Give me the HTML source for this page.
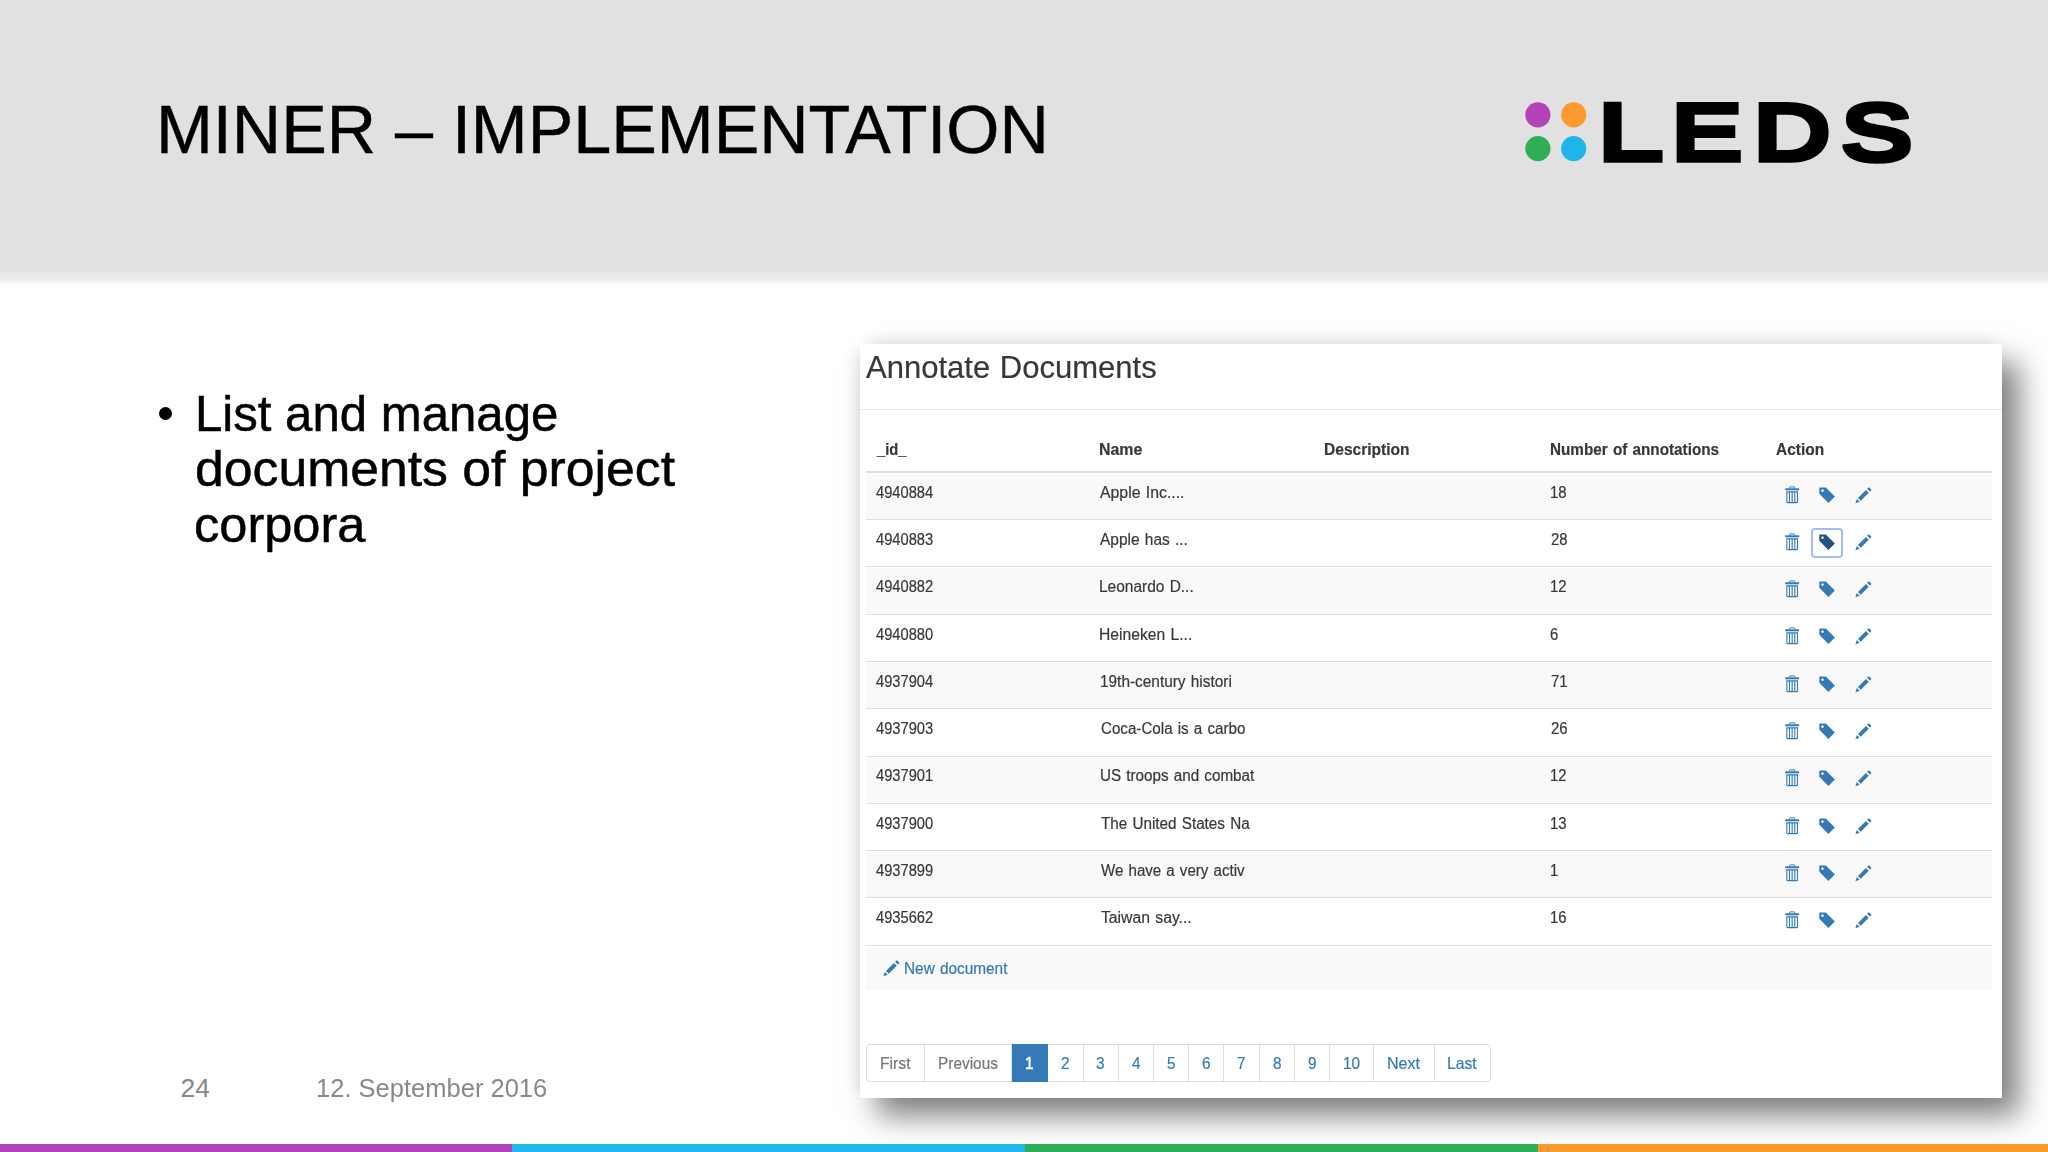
<!DOCTYPE html>
<html lang="en">
<head>
<meta charset="utf-8">
<title>MINER – IMPLEMENTATION</title>
<style>
html,body{margin:0;padding:0;background:#fff;}
body{width:2048px;height:1152px;overflow:hidden;font-family:"Liberation Sans",sans-serif;}
#slide{position:relative;width:2048px;height:1152px;overflow:hidden;background:#fff;}
.abs{position:absolute;white-space:nowrap;}
.sx{display:inline-block;transform-origin:0 50%;white-space:nowrap;}
/* header band */
#band{position:absolute;left:0;top:0;width:2048px;height:272px;background:#e1e1e1;}
#bandsh{position:absolute;left:0;top:272px;width:2048px;height:18px;
  background:linear-gradient(to bottom,#e9e9e9 0,#ececec 7px,#fbfbfb 12px,#ffffff 17px);}
#title{left:155.8px;top:90.9px;font-size:68.7px;line-height:78px;color:#000;-webkit-text-stroke:0.45px #000;}
/* body text */
.bl{font-size:50.5px;line-height:56px;color:#000;-webkit-text-stroke:0.5px #000;}
#bullet{position:absolute;left:158.6px;top:407px;width:13.2px;height:13.2px;border-radius:50%;background:#000;}
/* footer */
.ft{font-size:26.5px;line-height:30px;color:#898989;}
/* bottom bar */
#bar div{position:absolute;top:1144px;height:8px;}
/* screenshot */
#shot{position:absolute;left:860px;top:343.5px;width:1141.5px;height:754.3px;background:#fff;
  box-shadow:17px 18px 28px rgba(0,0,0,.5),0 -14px 11px -7px rgba(0,0,0,.06),-14px 0 11px -7px rgba(0,0,0,.06);}
#shot .abs{color:#333;}
#shotin{position:absolute;left:-860px;top:-343.5px;filter:blur(.4px);width:2048px;height:1152px;}
#shotin .abs{color:#383838;-webkit-text-stroke:0.2px currentColor;}
.ln{position:absolute;}
.ic{position:absolute;color:#337ab7;fill:currentColor;overflow:visible;}
.fbox{position:absolute;width:28.5px;height:25.6px;border:2px solid #a3bdf5;border-radius:4px;background:#fff;}
.pgbox{position:absolute;box-sizing:border-box;border:1.2px solid #ddd;border-radius:4px;background:#fff;}
</style>
</head>
<body>
<div id="slide">
  <div id="band"></div>
  <div id="bandsh"></div>
  <div id="title" class="abs"><span class="sx" style="transform:scaleX(.994)">MINER – IMPLEMENTATION</span></div>

  <svg id="logo" class="abs" style="left:1500px;top:80px" width="440" height="110" viewBox="1500 80 440 110">
    <filter id="thickY" x="-5%" y="-10%" width="110%" height="120%"><feMorphology operator="dilate" radius="0 1"/></filter>
    <circle cx="1537.9" cy="114.8" r="12.6" fill="#b443bb"/>
    <circle cx="1573.7" cy="114.8" r="12.6" fill="#fd9a2e"/>
    <circle cx="1537.9" cy="148.6" r="12.6" fill="#2eae57"/>
    <circle cx="1573.7" cy="148.6" r="12.6" fill="#20b4ea"/>
    <!--LOGO--><text transform="translate(0,160.70) scale(1.1077,0.8377)" x="1441.87 1507.90 1581.86 1661.38" y="0" font-size="100" font-family="Liberation Sans, sans-serif" font-weight="bold" fill="#000" stroke="#000" stroke-width="1.8" vector-effect="non-scaling-stroke" filter="url(#thickY)">LEDS</text><!--/LOGO-->
  </svg>

  <svg width="0" height="0" style="position:absolute">
    <defs>
      <symbol id="i-trash" viewBox="0 0 17 20" overflow="visible">
        <path d="M5.6 3.6V2.4Q5.6 1.9 6.1 1.9H10.2Q10.7 1.9 10.7 2.4V3.6" fill="none" stroke="currentColor" stroke-width="1"/>
        <rect x="1.2" y="3.3" width="13.9" height="2"/>
        <path fill-rule="evenodd" d="M2.3 6.3H14V16.8Q14 18.3 12.5 18.3H3.8Q2.3 18.3 2.3 16.8ZM3.4 7.6V16.9H4.95V7.6ZM6.05 7.6V16.9H7.6V7.6ZM8.7 7.6V16.9H10.25V7.6ZM11.35 7.6V16.9H12.9V7.6Z"/>
      </symbol>
      <symbol id="i-tag" viewBox="0 0 18 18" overflow="visible">
        <g transform="translate(1.3,16.95) scale(0.01297,-0.01297)"><path fill-rule="evenodd" d="M1 700v475q0 10 7.5 17.5t17.5 7.5h474l700 -700l-500 -500zM148 953q0 -42 29 -71q30 -30 71.5 -30t71.5 30q29 29 29 71t-29 71q-30 30 -71.5 30t-71.5 -30q-29 -29 -29 -71z"/></g>
      </symbol>
      <symbol id="i-pencil" viewBox="0 0 18 18" overflow="visible">
        <g transform="translate(1.6,17.1) scale(0.01297,-0.01297)"><path d="M1011 1210q19 0 33 -13l153 -153q13 -14 13 -33t-13 -33l-99 -92l-214 214l95 96q13 14 32 14zM1013 800l-615 -614l-214 214l614 614zM317 96l-333 -112l110 335z"/></g>
      </symbol>
    </defs>
  </svg>
  <div id="bullet"></div>
  <div class="abs bl" style="left:195.2px;top:386.3px"><span class="sx" style="transform:scaleX(.973)">List and manage</span></div>
  <div class="abs bl" style="left:194.6px;top:441px"><span class="sx" style="transform:scaleX(1.024)">documents of project</span></div>
  <div class="abs bl" style="left:194.1px;top:496.5px"><span class="sx" style="transform:scaleX(1.0)">corpora</span></div>

  <div class="abs ft" style="left:180.5px;top:1073px">24</div>
  <div class="abs ft" style="left:316px;top:1073px"><span class="sx" style="transform:scaleX(.963)">12. September 2016</span></div>

  <!--SHOT-BEGIN-->
  <div id="shot"><div id="shotin">
    <div class="ln" style="left:860px;top:408.5px;width:1141.5px;height:1.2px;background:#e6e6e6"></div>
    <div class="ln" style="left:866.4px;top:470.7px;width:1125.3px;height:2.3px;background:#dcdcdc"></div>
    <div class="ln" style="left:866.4px;top:473.5px;width:1125.3px;height:46.3px;background:#f9f9f9"></div>
    <div class="ln" style="left:866.4px;top:519px;width:1125.3px;height:1.4px;background:#dedede"></div>
    <div class="ln" style="left:866.4px;top:566px;width:1125.3px;height:1.4px;background:#dedede"></div>
    <div class="ln" style="left:866.4px;top:568.1px;width:1125.3px;height:46.3px;background:#f9f9f9"></div>
    <div class="ln" style="left:866.4px;top:614px;width:1125.3px;height:1.4px;background:#dedede"></div>
    <div class="ln" style="left:866.4px;top:661px;width:1125.3px;height:1.4px;background:#dedede"></div>
    <div class="ln" style="left:866.4px;top:662.7px;width:1125.3px;height:46.3px;background:#f9f9f9"></div>
    <div class="ln" style="left:866.4px;top:708px;width:1125.3px;height:1.4px;background:#dedede"></div>
    <div class="ln" style="left:866.4px;top:756px;width:1125.3px;height:1.4px;background:#dedede"></div>
    <div class="ln" style="left:866.4px;top:757.3px;width:1125.3px;height:46.3px;background:#f9f9f9"></div>
    <div class="ln" style="left:866.4px;top:803px;width:1125.3px;height:1.4px;background:#dedede"></div>
    <div class="ln" style="left:866.4px;top:850px;width:1125.3px;height:1.4px;background:#dedede"></div>
    <div class="ln" style="left:866.4px;top:851.9px;width:1125.3px;height:46.3px;background:#f9f9f9"></div>
    <div class="ln" style="left:866.4px;top:897px;width:1125.3px;height:1.4px;background:#dedede"></div>
    <div class="ln" style="left:866.4px;top:945px;width:1125.3px;height:1.4px;background:#dedede"></div>
    <div class="ln" style="left:866.4px;top:946.5px;width:1125.3px;height:43.6px;background:#f9f9f9"></div>
    <div class="pgbox" style="left:866.2px;top:1043.6px;width:624.7px;height:38px"></div>
    <div class="ln" style="left:923.9px;top:1044px;width:1.2px;height:37.5px;background:#ddd"></div>
    <div class="ln" style="left:1011.1px;top:1044px;width:1.2px;height:37.5px;background:#ddd"></div>
    <div class="ln" style="left:1047.3px;top:1044px;width:1.2px;height:37.5px;background:#ddd"></div>
    <div class="ln" style="left:1082.5px;top:1044px;width:1.2px;height:37.5px;background:#ddd"></div>
    <div class="ln" style="left:1117.7px;top:1044px;width:1.2px;height:37.5px;background:#ddd"></div>
    <div class="ln" style="left:1152.9px;top:1044px;width:1.2px;height:37.5px;background:#ddd"></div>
    <div class="ln" style="left:1188.1px;top:1044px;width:1.2px;height:37.5px;background:#ddd"></div>
    <div class="ln" style="left:1223.3px;top:1044px;width:1.2px;height:37.5px;background:#ddd"></div>
    <div class="ln" style="left:1258.5px;top:1044px;width:1.2px;height:37.5px;background:#ddd"></div>
    <div class="ln" style="left:1293.8px;top:1044px;width:1.2px;height:37.5px;background:#ddd"></div>
    <div class="ln" style="left:1329.2px;top:1044px;width:1.2px;height:37.5px;background:#ddd"></div>
    <div class="ln" style="left:1372.6px;top:1044px;width:1.2px;height:37.5px;background:#ddd"></div>
    <div class="ln" style="left:1433.5px;top:1044px;width:1.2px;height:37.5px;background:#ddd"></div>
    <div class="ln" style="left:1011.6px;top:1043.6px;width:36.4px;height:38.2px;background:#337ab7"></div>
    <div class="abs" style="left:865.7px;top:347.9px;font-size:31.7px;line-height:38.0px;word-spacing:1.0px;"><span class="sx" style="transform:scaleX(0.979)">Annotate Documents</span></div>
    <div class="abs" style="left:876.9px;top:439.9px;font-size:16.6px;line-height:19.9px;font-weight:bold;"><span class="sx" style="transform:scaleX(0.886)">_id_</span></div>
    <div class="abs" style="left:1099.3px;top:439.9px;font-size:16.6px;line-height:19.9px;font-weight:bold;"><span class="sx" style="transform:scaleX(0.960)">Name</span></div>
    <div class="abs" style="left:1324.1px;top:439.9px;font-size:16.6px;line-height:19.9px;font-weight:bold;"><span class="sx" style="transform:scaleX(0.937)">Description</span></div>
    <div class="abs" style="left:1550.0px;top:439.9px;font-size:16.6px;line-height:19.9px;word-spacing:1.0px;font-weight:bold;"><span class="sx" style="transform:scaleX(0.921)">Number of annotations</span></div>
    <div class="abs" style="left:1776.0px;top:439.9px;font-size:16.6px;line-height:19.9px;font-weight:bold;"><span class="sx" style="transform:scaleX(0.932)">Action</span></div>
    <div class="abs" style="left:875.9px;top:482.6px;font-size:16.0px;line-height:19.2px;"><span class="sx" style="transform:scaleX(0.918)">4940884</span></div>
    <div class="abs" style="left:1100.3px;top:482.6px;font-size:16.0px;line-height:19.2px;word-spacing:1.0px;"><span class="sx" style="transform:scaleX(0.988)">Apple Inc....</span></div>
    <div class="abs" style="left:1550.1px;top:482.6px;font-size:16.0px;line-height:19.2px;"><span class="sx" style="transform:scaleX(0.930)">18</span></div>
    <div class="abs" style="left:875.9px;top:529.9px;font-size:16.0px;line-height:19.2px;"><span class="sx" style="transform:scaleX(0.918)">4940883</span></div>
    <div class="abs" style="left:1100.3px;top:529.9px;font-size:16.0px;line-height:19.2px;word-spacing:1.0px;"><span class="sx" style="transform:scaleX(0.966)">Apple has ...</span></div>
    <div class="abs" style="left:1550.5px;top:529.9px;font-size:16.0px;line-height:19.2px;"><span class="sx" style="transform:scaleX(0.930)">28</span></div>
    <div class="abs" style="left:875.9px;top:577.2px;font-size:16.0px;line-height:19.2px;"><span class="sx" style="transform:scaleX(0.918)">4940882</span></div>
    <div class="abs" style="left:1099.3px;top:577.2px;font-size:16.0px;line-height:19.2px;word-spacing:1.0px;"><span class="sx" style="transform:scaleX(0.967)">Leonardo D...</span></div>
    <div class="abs" style="left:1550.1px;top:577.2px;font-size:16.0px;line-height:19.2px;"><span class="sx" style="transform:scaleX(0.930)">12</span></div>
    <div class="abs" style="left:875.9px;top:624.5px;font-size:16.0px;line-height:19.2px;"><span class="sx" style="transform:scaleX(0.918)">4940880</span></div>
    <div class="abs" style="left:1099.3px;top:624.5px;font-size:16.0px;line-height:19.2px;word-spacing:1.0px;"><span class="sx" style="transform:scaleX(0.979)">Heineken L...</span></div>
    <div class="abs" style="left:1550.4px;top:624.5px;font-size:16.0px;line-height:19.2px;"><span class="sx" style="transform:scaleX(0.930)">6</span></div>
    <div class="abs" style="left:875.9px;top:671.8px;font-size:16.0px;line-height:19.2px;"><span class="sx" style="transform:scaleX(0.918)">4937904</span></div>
    <div class="abs" style="left:1099.8px;top:671.8px;font-size:16.0px;line-height:19.2px;word-spacing:1.0px;"><span class="sx" style="transform:scaleX(0.962)">19th-century histori</span></div>
    <div class="abs" style="left:1550.5px;top:671.8px;font-size:16.0px;line-height:19.2px;"><span class="sx" style="transform:scaleX(0.930)">71</span></div>
    <div class="abs" style="left:875.9px;top:719.1px;font-size:16.0px;line-height:19.2px;"><span class="sx" style="transform:scaleX(0.918)">4937903</span></div>
    <div class="abs" style="left:1100.8px;top:719.1px;font-size:16.0px;line-height:19.2px;word-spacing:1.0px;"><span class="sx" style="transform:scaleX(0.947)">Coca-Cola is a carbo</span></div>
    <div class="abs" style="left:1550.5px;top:719.1px;font-size:16.0px;line-height:19.2px;"><span class="sx" style="transform:scaleX(0.930)">26</span></div>
    <div class="abs" style="left:875.9px;top:766.4px;font-size:16.0px;line-height:19.2px;"><span class="sx" style="transform:scaleX(0.918)">4937901</span></div>
    <div class="abs" style="left:1099.8px;top:766.4px;font-size:16.0px;line-height:19.2px;word-spacing:1.0px;"><span class="sx" style="transform:scaleX(0.951)">US troops and combat</span></div>
    <div class="abs" style="left:1550.1px;top:766.4px;font-size:16.0px;line-height:19.2px;"><span class="sx" style="transform:scaleX(0.930)">12</span></div>
    <div class="abs" style="left:875.9px;top:813.7px;font-size:16.0px;line-height:19.2px;"><span class="sx" style="transform:scaleX(0.918)">4937900</span></div>
    <div class="abs" style="left:1100.8px;top:813.7px;font-size:16.0px;line-height:19.2px;word-spacing:1.0px;"><span class="sx" style="transform:scaleX(0.953)">The United States Na</span></div>
    <div class="abs" style="left:1550.1px;top:813.7px;font-size:16.0px;line-height:19.2px;"><span class="sx" style="transform:scaleX(0.930)">13</span></div>
    <div class="abs" style="left:875.9px;top:861.0px;font-size:16.0px;line-height:19.2px;"><span class="sx" style="transform:scaleX(0.918)">4937899</span></div>
    <div class="abs" style="left:1100.8px;top:861.0px;font-size:16.0px;line-height:19.2px;word-spacing:1.0px;"><span class="sx" style="transform:scaleX(0.943)">We have a very activ</span></div>
    <div class="abs" style="left:1549.9px;top:861.0px;font-size:16.0px;line-height:19.2px;"><span class="sx" style="transform:scaleX(0.930)">1</span></div>
    <div class="abs" style="left:875.9px;top:908.3px;font-size:16.0px;line-height:19.2px;"><span class="sx" style="transform:scaleX(0.918)">4935662</span></div>
    <div class="abs" style="left:1100.8px;top:908.3px;font-size:16.0px;line-height:19.2px;word-spacing:1.0px;"><span class="sx" style="transform:scaleX(0.983)">Taiwan say...</span></div>
    <div class="abs" style="left:1550.1px;top:908.3px;font-size:16.0px;line-height:19.2px;"><span class="sx" style="transform:scaleX(0.930)">16</span></div>
    <div class="abs" style="left:904.2px;top:959.2px;font-size:16.0px;line-height:19.2px;word-spacing:1.0px;color:#337ab7;"><span class="sx" style="transform:scaleX(0.960)">New document</span></div>
    <div class="abs" style="left:879.8px;top:1054.1px;font-size:16.5px;line-height:19.8px;color:#777;"><span class="sx" style="transform:scaleX(0.953)">First</span></div>
    <div class="abs" style="left:937.5px;top:1054.1px;font-size:16.5px;line-height:19.8px;color:#777;"><span class="sx" style="transform:scaleX(0.934)">Previous</span></div>
    <div class="abs" style="left:1025.0px;top:1054.1px;font-size:16.5px;line-height:19.8px;color:#fff;-webkit-text-stroke:0.5px #fff;"><span class="sx" style="transform:scaleX(0.930)">1</span></div>
    <div class="abs" style="left:1060.9px;top:1054.1px;font-size:16.5px;line-height:19.8px;color:#337ab7;"><span class="sx" style="transform:scaleX(0.930)">2</span></div>
    <div class="abs" style="left:1096.3px;top:1054.1px;font-size:16.5px;line-height:19.8px;color:#337ab7;"><span class="sx" style="transform:scaleX(0.930)">3</span></div>
    <div class="abs" style="left:1131.7px;top:1054.1px;font-size:16.5px;line-height:19.8px;color:#337ab7;"><span class="sx" style="transform:scaleX(0.930)">4</span></div>
    <div class="abs" style="left:1166.7px;top:1054.1px;font-size:16.5px;line-height:19.8px;color:#337ab7;"><span class="sx" style="transform:scaleX(0.930)">5</span></div>
    <div class="abs" style="left:1201.9px;top:1054.1px;font-size:16.5px;line-height:19.8px;color:#337ab7;"><span class="sx" style="transform:scaleX(0.930)">6</span></div>
    <div class="abs" style="left:1237.4px;top:1054.1px;font-size:16.5px;line-height:19.8px;color:#337ab7;"><span class="sx" style="transform:scaleX(0.930)">7</span></div>
    <div class="abs" style="left:1272.6px;top:1054.1px;font-size:16.5px;line-height:19.8px;color:#337ab7;"><span class="sx" style="transform:scaleX(0.930)">8</span></div>
    <div class="abs" style="left:1307.9px;top:1054.1px;font-size:16.5px;line-height:19.8px;color:#337ab7;"><span class="sx" style="transform:scaleX(0.930)">9</span></div>
    <div class="abs" style="left:1343.4px;top:1054.1px;font-size:16.5px;line-height:19.8px;color:#337ab7;"><span class="sx" style="transform:scaleX(0.930)">10</span></div>
    <div class="abs" style="left:1386.5px;top:1054.1px;font-size:16.5px;line-height:19.8px;color:#337ab7;"><span class="sx" style="transform:scaleX(0.975)">Next</span></div>
    <div class="abs" style="left:1446.6px;top:1054.1px;font-size:16.5px;line-height:19.8px;color:#337ab7;"><span class="sx" style="transform:scaleX(0.951)">Last</span></div>
    <svg class="ic" style="left:1784px;top:484.5px" width="17" height="20" viewBox="0 0 17 20"><use href="#i-trash"/></svg>
    <svg class="ic" style="left:1818px;top:485.5px;color:#337ab7" width="18" height="18" viewBox="0 0 18 18"><use href="#i-tag"/></svg>
    <svg class="ic" style="left:1853.5px;top:485.5px" width="18" height="18" viewBox="0 0 18 18"><use href="#i-pencil"/></svg>
    <svg class="ic" style="left:1784px;top:531.8px" width="17" height="20" viewBox="0 0 17 20"><use href="#i-trash"/></svg>
    <div class="fbox" style="left:1810.8px;top:528.1px"></div>
    <svg class="ic" style="left:1818px;top:532.8px;color:#23527c" width="18" height="18" viewBox="0 0 18 18"><use href="#i-tag"/></svg>
    <svg class="ic" style="left:1853.5px;top:532.8px" width="18" height="18" viewBox="0 0 18 18"><use href="#i-pencil"/></svg>
    <svg class="ic" style="left:1784px;top:579.1px" width="17" height="20" viewBox="0 0 17 20"><use href="#i-trash"/></svg>
    <svg class="ic" style="left:1818px;top:580.1px;color:#337ab7" width="18" height="18" viewBox="0 0 18 18"><use href="#i-tag"/></svg>
    <svg class="ic" style="left:1853.5px;top:580.1px" width="18" height="18" viewBox="0 0 18 18"><use href="#i-pencil"/></svg>
    <svg class="ic" style="left:1784px;top:626.4px" width="17" height="20" viewBox="0 0 17 20"><use href="#i-trash"/></svg>
    <svg class="ic" style="left:1818px;top:627.4px;color:#337ab7" width="18" height="18" viewBox="0 0 18 18"><use href="#i-tag"/></svg>
    <svg class="ic" style="left:1853.5px;top:627.4px" width="18" height="18" viewBox="0 0 18 18"><use href="#i-pencil"/></svg>
    <svg class="ic" style="left:1784px;top:673.7px" width="17" height="20" viewBox="0 0 17 20"><use href="#i-trash"/></svg>
    <svg class="ic" style="left:1818px;top:674.7px;color:#337ab7" width="18" height="18" viewBox="0 0 18 18"><use href="#i-tag"/></svg>
    <svg class="ic" style="left:1853.5px;top:674.7px" width="18" height="18" viewBox="0 0 18 18"><use href="#i-pencil"/></svg>
    <svg class="ic" style="left:1784px;top:721.0px" width="17" height="20" viewBox="0 0 17 20"><use href="#i-trash"/></svg>
    <svg class="ic" style="left:1818px;top:722.0px;color:#337ab7" width="18" height="18" viewBox="0 0 18 18"><use href="#i-tag"/></svg>
    <svg class="ic" style="left:1853.5px;top:722.0px" width="18" height="18" viewBox="0 0 18 18"><use href="#i-pencil"/></svg>
    <svg class="ic" style="left:1784px;top:768.3px" width="17" height="20" viewBox="0 0 17 20"><use href="#i-trash"/></svg>
    <svg class="ic" style="left:1818px;top:769.3px;color:#337ab7" width="18" height="18" viewBox="0 0 18 18"><use href="#i-tag"/></svg>
    <svg class="ic" style="left:1853.5px;top:769.3px" width="18" height="18" viewBox="0 0 18 18"><use href="#i-pencil"/></svg>
    <svg class="ic" style="left:1784px;top:815.6px" width="17" height="20" viewBox="0 0 17 20"><use href="#i-trash"/></svg>
    <svg class="ic" style="left:1818px;top:816.6px;color:#337ab7" width="18" height="18" viewBox="0 0 18 18"><use href="#i-tag"/></svg>
    <svg class="ic" style="left:1853.5px;top:816.6px" width="18" height="18" viewBox="0 0 18 18"><use href="#i-pencil"/></svg>
    <svg class="ic" style="left:1784px;top:862.9px" width="17" height="20" viewBox="0 0 17 20"><use href="#i-trash"/></svg>
    <svg class="ic" style="left:1818px;top:863.9px;color:#337ab7" width="18" height="18" viewBox="0 0 18 18"><use href="#i-tag"/></svg>
    <svg class="ic" style="left:1853.5px;top:863.9px" width="18" height="18" viewBox="0 0 18 18"><use href="#i-pencil"/></svg>
    <svg class="ic" style="left:1784px;top:910.2px" width="17" height="20" viewBox="0 0 17 20"><use href="#i-trash"/></svg>
    <svg class="ic" style="left:1818px;top:911.2px;color:#337ab7" width="18" height="18" viewBox="0 0 18 18"><use href="#i-tag"/></svg>
    <svg class="ic" style="left:1853.5px;top:911.2px" width="18" height="18" viewBox="0 0 18 18"><use href="#i-pencil"/></svg>
    <svg class="ic" style="left:881.5px;top:959px" width="18" height="18" viewBox="0 0 18 18"><use href="#i-pencil"/></svg>
  </div></div>
  <!--SHOT-END-->

  <div id="bar">
    <div style="left:0;width:512px;background:#b242bb"></div>
    <div style="left:512px;width:513px;background:#21b7ec"></div>
    <div style="left:1025px;width:513px;background:#2eae56"></div>
    <div style="left:1538px;width:510px;background:#fc992c"></div>
  </div>
</div>
</body>
</html>
